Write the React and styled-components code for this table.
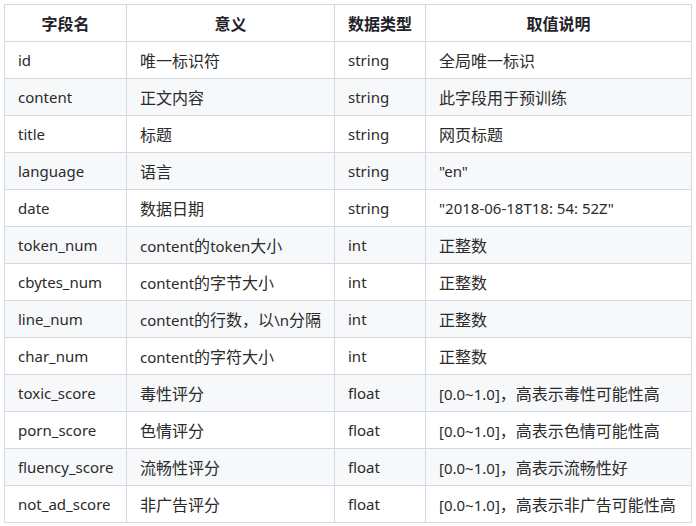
import React from "react";
import styled, { createGlobalStyle } from "styled-components";

const Global = createGlobalStyle`
  html, body { margin: 0; padding: 0; background: #ffffff; }
  body {
    font-family: "Noto Sans", "Noto Sans CJK SC", sans-serif;
    color: #2b2b2b;
  }
`;

const Page = styled.div`
  padding: 4px;
`;

const Table = styled.table`
  border-collapse: collapse;
  table-layout: fixed;
  width: 687px;
  font-size: 15px;
`;

const HeadCell = styled.th`
  height: 36px;
  padding: 0 13px;
  border: 1px solid #d3d9e2;
  font-weight: 700;
  font-size: 16px;
  color: #1f2328;
  text-align: center;
  background: #ffffff;
`;

const Row = styled.tr`
  background: ${(p) => (p.$striped ? "#f6f8fa" : "#ffffff")};
`;

const Cell = styled.td`
  height: 36px;
  padding: 0 13px;
  border: 1px solid #d3d9e2;
  white-space: nowrap;
  text-align: left;
  vertical-align: middle;
`;

const Han = styled.span`
  font-family: "Noto Sans CJK SC", sans-serif;
  font-size: 16px;
`;

const rows = [
  ["id", "唯一标识符", "string", "全局唯一标识"],
  ["content", "正文内容", "string", "此字段用于预训练"],
  ["title", "标题", "string", "网页标题"],
  ["language", "语言", "string", '"en"'],
  ["date", "数据日期", "string", '"2018-06-18T18: 54: 52Z"'],
  ["token_num", "content的token大小", "int", "正整数"],
  ["cbytes_num", "content的字节大小", "int", "正整数"],
  ["line_num", "content的行数，以\\n分隔", "int", "正整数"],
  ["char_num", "content的字符大小", "int", "正整数"],
  ["toxic_score", "毒性评分", "float", "[0.0~1.0]，高表示毒性可能性高"],
  ["porn_score", "色情评分", "float", "[0.0~1.0]，高表示色情可能性高"],
  ["fluency_score", "流畅性评分", "float", "[0.0~1.0]，高表示流畅性好"],
  ["not_ad_score", "非广告评分", "float", "[0.0~1.0]，高表示非广告可能性高"],
];

function Mixed({ text }) {
  const parts = text.split(/([\u3000-\u9fff\uff00-\uffef]+)/);
  return parts.map((p, i) =>
    i % 2 === 1 ? <Han key={i}>{p}</Han> : p ? <React.Fragment key={i}>{p}</React.Fragment> : null
  );
}

export default function App() {
  return (
    <>
      <Global />
      <Page>
        <Table>
          <colgroup>
            <col style={{ width: 122 }} />
            <col style={{ width: 208 }} />
            <col style={{ width: 91 }} />
            <col style={{ width: 266 }} />
          </colgroup>
          <thead>
            <tr>
              <HeadCell>字段名</HeadCell>
              <HeadCell>意义</HeadCell>
              <HeadCell>数据类型</HeadCell>
              <HeadCell>取值说明</HeadCell>
            </tr>
          </thead>
          <tbody>
            {rows.map((r, i) => (
              <Row key={r[0]} $striped={i % 2 === 1}>
                {r.map((c, j) => (
                  <Cell key={j}>
                    <Mixed text={c} />
                  </Cell>
                ))}
              </Row>
            ))}
          </tbody>
        </Table>
      </Page>
    </>
  );
}
